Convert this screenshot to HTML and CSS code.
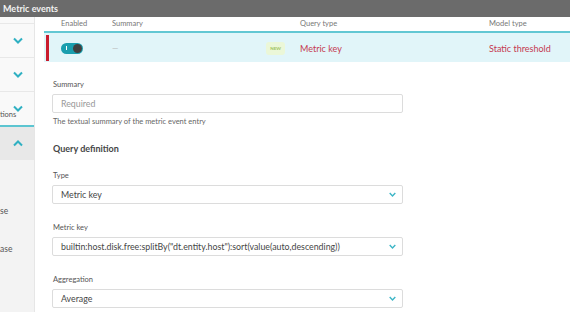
FILE: index.html
```html
<!DOCTYPE html>
<html lang="en">
<head>
    <meta charset="UTF-8">
    <title>Metric events</title>
    <link rel="stylesheet" href="styles.css">
</head>
<body>

    <div class="topbar">Metric events</div>

    <div class="page">
        <aside class="sidebar">
            <div class="side-row side-top"></div>
            <div class="side-row">
                <svg class="chev" viewBox="0 0 10 6"><path d="M1 1 L5 5 L9 1"/></svg>
            </div>
            <div class="side-row">
                <svg class="chev" viewBox="0 0 10 6"><path d="M1 1 L5 5 L9 1"/></svg>
            </div>
            <div class="side-row side-label">
                <span class="clipped">tions</span>
                <svg class="chev" viewBox="0 0 10 6"><path d="M1 1 L5 5 L9 1"/></svg>
            </div>
            <div class="side-row side-open">
                <svg class="chev" viewBox="0 0 10 6"><path d="M1 5 L5 1 L9 5"/></svg>
            </div>
            <div class="side-links">
                <span class="side-link">se</span>
                <span class="side-link">ase</span>
            </div>
        </aside>

        <main class="main">
            <div class="table-head">
                <span>Enabled</span>
                <span>Summary</span>
                <span>Query type</span>
                <span>Model type</span>
            </div>
            <div class="table-row">
                <div class="marker"></div>
                <div class="cells">
                    <div>
                        <span class="toggle"><span class="toggle-i"></span><span class="knob"></span></span>
                    </div>
                    <div class="summary-cell">
                        <span class="dash">—</span>
                        <span class="badge">NEW</span>
                    </div>
                    <div class="red">Metric key</div>
                    <div class="red">Static threshold</div>
                </div>
            </div>

            <form class="form">
                <div class="field first">
                    <label>Summary</label>
                    <input class="input" type="text" placeholder="Required">
                    <div class="help">The textual summary of the metric event entry</div>
                </div>

                <h3 class="section">Query definition</h3>

                <div class="field">
                    <label>Type</label>
                    <div class="select">
                        <span>Metric key</span>
                        <svg class="sel-chev" viewBox="0 0 10 6"><path d="M1 1 L5 5 L9 1"/></svg>
                    </div>
                </div>

                <div class="field">
                    <label>Metric key</label>
                    <div class="select">
                        <span>builtin:host.disk.free:splitBy("dt.entity.host"):sort(value(auto,descending))</span>
                        <svg class="sel-chev" viewBox="0 0 10 6"><path d="M1 1 L5 5 L9 1"/></svg>
                    </div>
                </div>

                <div class="field">
                    <label>Aggregation</label>
                    <div class="select">
                        <span>Average</span>
                        <svg class="sel-chev" viewBox="0 0 10 6"><path d="M1 1 L5 5 L9 1"/></svg>
                    </div>
                </div>
            </form>
        </main>
    </div>

</body>
</html>
```

FILE: styles.css
```css
* {
    box-sizing: border-box;
}

body {
    margin: 0;
    font-family: "Lato", "Open Sans", sans-serif;
    color: #454646;
    background: #fff;
    height: 312px;
    overflow: hidden;
}

/* TOP BAR */
.topbar {
    height: 17px;
    background: #6b6b6b;
    color: #f2f2f2;
    font-size: 9px;
    font-weight: bold;
    line-height: 17px;
    padding-left: 3px;
}

.page {
    display: flex;
    height: 295px;
}

/* SIDEBAR */
.sidebar {
    width: 35px;
    background: #f3f3f3;
    border-right: 1px solid #e6e6e6;
    display: flex;
    flex-direction: column;
    overflow: hidden;
}

.side-row {
    height: 34px;
    background: #f9f9f9;
    border-bottom: 1px solid #e8e8e8;
    display: flex;
    align-items: center;
    justify-content: center;
    position: relative;
}

.side-top {
    height: 7px;
}

.side-label {
    border-bottom: 2px solid #5cc5d1;
    height: 35px;
}

.side-label .chev {
    margin-top: -1px;
}

.clipped {
    position: absolute;
    left: 0;
    bottom: 6px;
    font-size: 7.5px;
    color: #555;
}

.side-open {
    background: #e8e8e8;
    border-bottom: none;
    height: 33px;
}

.chev {
    width: 10px;
    height: 7px;
    fill: none;
    stroke: #2fb0c2;
    stroke-width: 2;
    margin-left: 2px;
}

.side-links {
    display: flex;
    flex-direction: column;
    gap: 28px;
    padding-top: 46px;
    font-size: 8.5px;
    color: #555;
}

/* TABLE */
.main {
    flex: 1;
    padding-left: 9px;
}

.table-head {
    display: grid;
    grid-template-columns: 51px 188px 189px 1fr;
    padding-left: 17px;
    height: 16px;
    font-size: 7.5px;
    color: #777;
    line-height: 10px;
    padding-top: 2px;
    border-bottom: 2px solid #62c7d3;
}

.table-row {
    display: flex;
    height: 29px;
    padding: 2px 0 1px 2px;
    background: #e1f5f9;
}

.marker {
    width: 3px;
    background: #c81c2e;
}

.cells {
    flex: 1;
    display: grid;
    grid-template-columns: 51px 188px 189px 1fr;
    align-items: center;
    padding-left: 12px;
    font-size: 9px;
}

.toggle {
    display: flex;
    align-items: center;
    justify-content: space-between;
    width: 22px;
    height: 11px;
    border-radius: 6px;
    background: #1a9eae;
    padding: 0 1px 0 5px;
}

.toggle-i {
    width: 1px;
    height: 4px;
    background: #fff;
}

.knob {
    width: 9px;
    height: 9px;
    border-radius: 50%;
    background: #404040;
}

.summary-cell {
    display: flex;
    align-items: center;
    justify-content: space-between;
    padding-right: 15px;
}

.dash {
    color: #b5b5b5;
    font-size: 8px;
}

.badge {
    background: #ebf7d8;
    color: #9cc15a;
    font-size: 4.5px;
    font-weight: bold;
    padding: 4px 4px;
    border-radius: 3px;
}

.red {
    color: #c53a51;
}

/* FORM */
.form {
    margin-left: 8px;
    width: 351px;
    padding-top: 18px;
}

.field {
    margin-top: 16px;
}

.field.first {
    margin-top: 0;
}

.field label {
    display: block;
    font-size: 7.5px;
    line-height: 10px;
    padding-left: 1px;
    margin-bottom: 4px;
    color: #555;
}

.input,
.select {
    display: block;
    width: 100%;
    height: 19px;
    border: 1px solid #dcdcdc;
    border-radius: 2px;
    background: #fff;
    padding: 0 8px;
    font-family: inherit;
    font-size: 8.8px;
    color: #454646;
}

.input::placeholder {
    color: #999;
}

.select {
    display: flex;
    align-items: center;
    justify-content: space-between;
    padding-right: 6px;
}

.sel-chev {
    width: 7px;
    height: 5px;
    fill: none;
    stroke: #3bb5c6;
    stroke-width: 2;
}

.help {
    font-size: 7.5px;
    line-height: 10px;
    margin-top: 4px;
    padding-left: 1px;
    color: #666;
}

.section {
    margin: 16px 0 0 1px;
    font-size: 9px;
    line-height: 12px;
    font-weight: bold;
    color: #454646;
}

.section + .field {
    margin-top: 16px;
}

.field + .field {
    margin-top: 19px;
}
```
